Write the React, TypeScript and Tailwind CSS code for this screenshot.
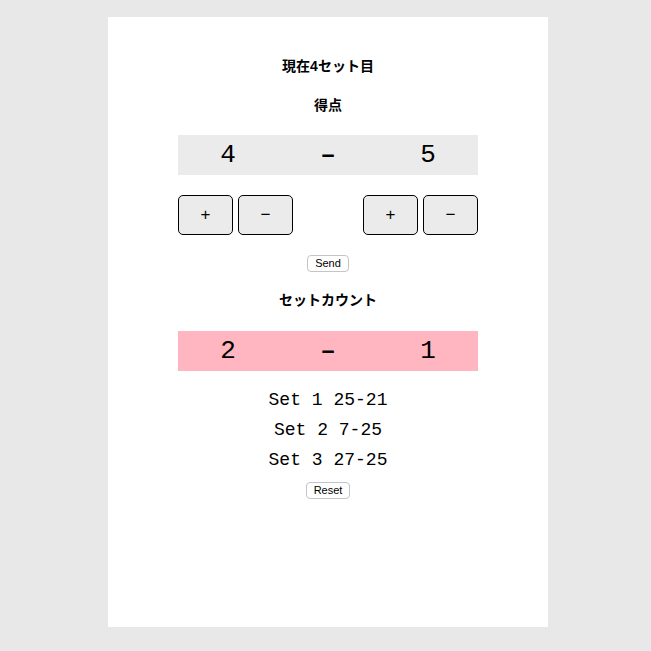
import { useState } from 'react';

const mono = "font-['Liberation_Mono','DejaVu_Sans_Mono',monospace]";

function ScoreRow({ left, right, bg }: { left: number; right: number; bg: string }) {
  return (
    <div className={`grid h-10 w-[300px] grid-cols-3 items-center text-center text-[26px] leading-none text-black ${mono} ${bg}`}>
      <span>{left}</span>
      <span className="font-bold">–</span>
      <span>{right}</span>
    </div>
  );
}

function PmButton({ label, onClick }: { label: string; onClick: () => void }) {
  return (
    <button
      onClick={onClick}
      className="h-10 w-[55px] rounded-[5px] border border-black bg-[#ebebeb] text-[17px] text-black"
    >
      {label}
    </button>
  );
}

export default function App() {
  const [home, setHome] = useState(4);
  const [away, setAway] = useState(5);
  const sets = [
    { no: 1, a: 25, b: 21 },
    { no: 2, a: 7, b: 25 },
    { no: 3, a: 27, b: 25 },
  ];

  return (
    <div className="flex min-h-[651px] bg-[#e8e8e8] pl-[108px] pt-[17px] font-['Liberation_Sans','Noto_Sans_CJK_JP',sans-serif]">
      <div className="flex h-[610px] w-[440px] flex-col items-center bg-white">
        <h1 className="mt-[39px] h-5 text-[14px] font-bold leading-5 text-black">現在4セット目</h1>
        <h2 className="mt-[19px] h-5 text-[14px] font-bold leading-5 text-black">得点</h2>

        <div className="mt-[20px]">
          <ScoreRow left={home} right={away} bg="bg-[#ebebeb]" />
        </div>

        <div className="mt-5 flex w-[300px] justify-between">
          <div className="flex gap-[5px]">
            <PmButton label="+" onClick={() => setHome((v) => v + 1)} />
            <PmButton label="−" onClick={() => setHome((v) => Math.max(0, v - 1))} />
          </div>
          <div className="flex gap-[5px]">
            <PmButton label="+" onClick={() => setAway((v) => v + 1)} />
            <PmButton label="−" onClick={() => setAway((v) => Math.max(0, v - 1))} />
          </div>
        </div>

        <button className="mt-5 h-[17px] rounded-[4px] border border-[#c4c4c4] bg-white px-[7px] text-[11px] leading-none text-black">
          Send
        </button>

        <h2 className="mt-[18px] h-5 text-[14px] font-bold leading-5 text-black">セットカウント</h2>

        <div className="mt-[21px]">
          <ScoreRow left={2} right={1} bg="bg-[#ffb6c1]" />
        </div>

        <div className={`mt-[14px] flex flex-col items-center text-[18px] leading-[30px] text-black ${mono}`}>
          {sets.map((s) => (
            <p key={s.no}>
              Set {s.no} {s.a}-{s.b}
            </p>
          ))}
        </div>

        <button className="mt-[7px] h-[17px] rounded-[4px] border border-[#c4c4c4] bg-white px-[7px] text-[11px] leading-none text-black">
          Reset
        </button>
      </div>
    </div>
  );
}
